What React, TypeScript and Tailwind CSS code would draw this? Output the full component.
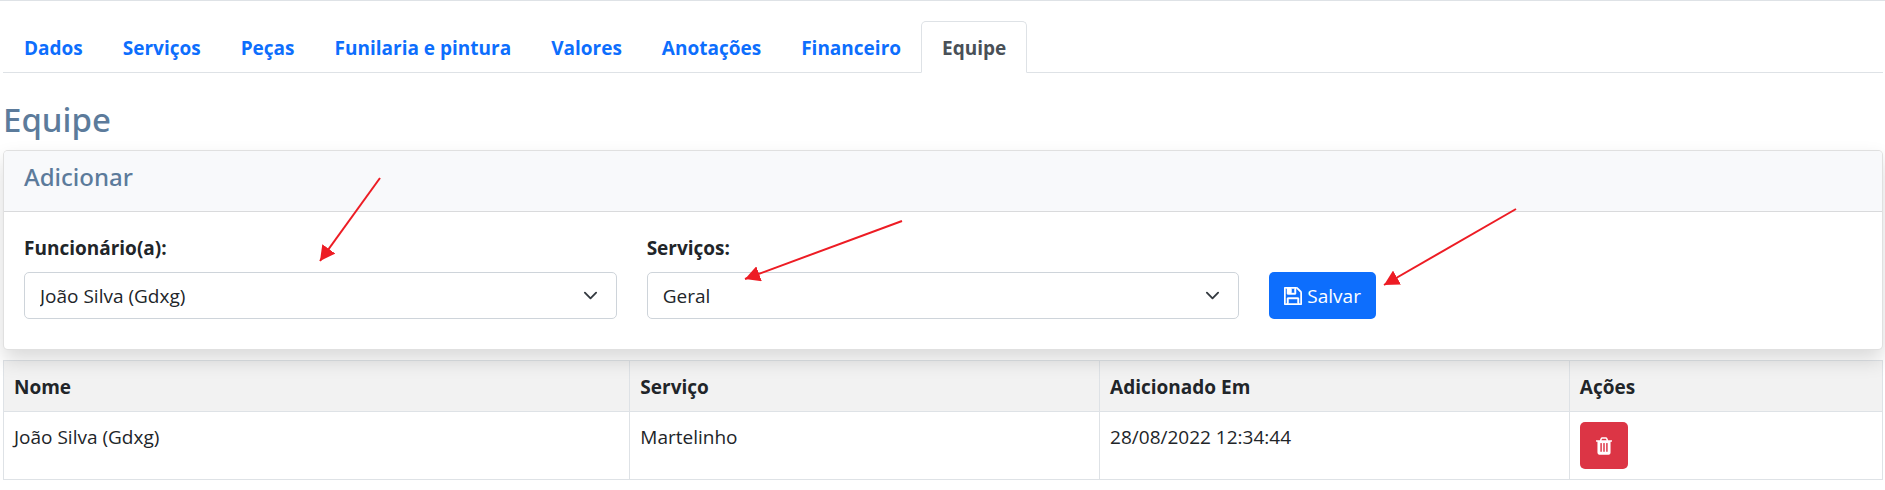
import type { ReactNode } from "react"

const tabs = [
  "Dados",
  "Serviços",
  "Peças",
  "Funilaria e pintura",
  "Valores",
  "Anotações",
  "Financeiro",
  "Equipe",
]

const members = [
  { name: "João Silva (Gdxg)", service: "Martelinho", addedAt: "28/08/2022 12:34:44" },
]

const arrows = [
  { x1: 380, y1: 177, x2: 320, y2: 260 },
  { x1: 902, y1: 220, x2: 745, y2: 278 },
  { x1: 1516, y1: 208, x2: 1384, y2: 284 },
]

function SaveIcon() {
  return (
    <svg viewBox="128 128 1536 1536" fill="currentColor" className="size-[18px]" aria-hidden="true">
      <path
        stroke="currentColor"
        strokeWidth="40"
        d="M512 1536h768v-384h-768v384zm896 0h128v-896q0-14-10-38.5t-20-34.5l-281-281q-10-10-34-20t-39-10v416q0 40-28 68t-68 28h-576q-40 0-68-28t-28-68v-416h-128v1280h128v-416q0-40 28-68t68-28h832q40 0 68 28t28 68v416zm-384-928v-320q0-13-9.5-22.5t-22.5-9.5h-192q-13 0-22.5 9.5t-9.5 22.5v320q0 13 9.5 22.5t22.5 9.5h192q13 0 22.5-9.5t9.5-22.5zm640 32v928q0 40-28 68t-68 28h-1344q-40 0-68-28t-28-68v-1344q0-40 28-68t68-28h928q40 0 88 20t76 48l280 280q28 28 48 76t20 88z"
      />
    </svg>
  )
}

function TrashIcon() {
  return (
    <svg viewBox="192 128 1408 1536" fill="currentColor" className="h-[18px] w-4" aria-hidden="true">
      <path d="M704 1376v-704q0-14-9-23t-23-9h-64q-14 0-23 9t-9 23v704q0 14 9 23t23 9h64q14 0 23-9t9-23zm256 0v-704q0-14-9-23t-23-9h-64q-14 0-23 9t-9 23v704q0 14 9 23t23 9h64q14 0 23-9t9-23zm256 0v-704q0-14-9-23t-23-9h-64q-14 0-23 9t-9 23v704q0 14 9 23t23 9h64q14 0 23-9t9-23zm-544-992h448l-48-117q-7-9-17-11h-317q-10 2-17 11zm928 32v64q0 14-9 23t-23 9h-96v948q0 83-47 143.5t-113 60.5h-832q-66 0-113-58.5t-47-141.5v-952h-96q-14 0-23-9t-9-23v-64q0-14 9-23t23-9h309l70-167q15-37 54-63t79-26h320q40 0 79 26t54 63l70 167h309q14 0 23 9t9 23z" />
    </svg>
  )
}

function SelectField({ id, label, children }: { id: string; label: string; children: ReactNode }) {
  return (
    <div>
      <label htmlFor={id} className="mb-[9px] block font-bold">
        {label}
      </label>
      <div className="relative">
        <select
          id={id}
          className="block h-[47px] w-full appearance-none rounded-[5px] border border-[#ced4da] bg-white px-[15px]"
        >
          {children}
        </select>
        <svg
          viewBox="0 0 16 16"
          className="pointer-events-none absolute top-4 right-[19px] size-[15px] fill-none stroke-[#343a40] stroke-2"
          strokeLinecap="round"
          strokeLinejoin="round"
          aria-hidden="true"
        >
          <path d="M2 5l6 6 6-6" />
        </svg>
      </div>
    </div>
  )
}

// Red guide arrows drawn over the page
function GuideArrows() {
  return (
    <svg className="pointer-events-none absolute inset-0 h-full w-full" aria-hidden="true">
      <defs>
        <marker
          id="arrow-head"
          markerUnits="userSpaceOnUse"
          markerWidth="16"
          markerHeight="16"
          refX="15"
          refY="8"
          orient="auto"
        >
          <path d="M0 0L15 8L0 16Z" fill="#ed1c24" />
        </marker>
      </defs>
      {arrows.map((arrow) => (
        <line key={arrow.x1} {...arrow} stroke="#ed1c24" strokeWidth="2" markerEnd="url(#arrow-head)" />
      ))}
    </svg>
  )
}

export default function App() {
  return (
    <div className="relative border-t border-[#dee2e6] bg-white pt-5 pr-[2px] pb-[10px] pl-[3px] font-['Open_Sans','Noto_Sans',sans-serif] text-[19px] leading-[30px] text-[#212529]">
      <nav className="flex border-b border-[#dee2e6] pl-px font-bold">
        {tabs.map((tab) => (
          <a
            key={tab}
            href="#"
            className={
              tab === "Equipe"
                ? "-mb-px rounded-t-[5px] border border-[#dee2e6] border-b-white bg-white px-5 pt-[11px] pb-[9px] text-[#495057]"
                : "-mb-px border border-transparent px-[19px] pt-[11px] pb-[9px] text-[#0d6efd]"
            }
          >
            {tab}
          </a>
        ))}
      </nav>

      <h2 className="mt-[26px] mb-[9px] font-['Noto_Sans',sans-serif] text-[33px] leading-[42px] font-medium text-[#5c7b9b]">
        Equipe
      </h2>

      <section className="relative rounded-[5px] border border-black/12 bg-white shadow-[0_10px_20px_rgba(0,0,0,0.15)]">
        <header className="rounded-t-[4px] border-b border-black/12 bg-[#f8f9fb] px-5 pt-[11px] pb-[19px]">
          <h5 className="font-['Noto_Sans',sans-serif] text-2xl leading-[30px] font-medium text-[#5c7b9b]">
            Adicionar
          </h5>
        </header>
        <form className="grid grid-cols-3 items-end gap-[30px] px-5 pt-[21px] pb-[30px]">
          <SelectField id="employee" label="Funcionário(a):">
            <option>João Silva (Gdxg)</option>
          </SelectField>
          <SelectField id="service" label="Serviços:">
            <option>Geral</option>
          </SelectField>
          <div>
            <button
              type="button"
              className="flex h-[47px] items-center gap-[5px] rounded-[5px] bg-[#0d6efd] px-[15px] text-white"
            >
              <SaveIcon />
              Salvar
            </button>
          </div>
        </form>
      </section>

      <table className="mt-[10px] w-full table-fixed border-collapse text-left [&_td]:border [&_td]:border-[#dee2e6] [&_td]:p-[10px] [&_th]:border [&_th]:border-[#dee2e6] [&_th]:px-[10px] [&_th]:pt-[11px] [&_th]:pb-[9px]">
        <thead className="bg-[#f2f2f2]">
          <tr>
            <th className="w-1/3">Nome</th>
            <th className="w-1/4">Serviço</th>
            <th className="w-1/4">Adicionado Em</th>
            <th className="w-1/6">Ações</th>
          </tr>
        </thead>
        <tbody>
          {members.map((member) => (
            <tr key={member.name} className="align-top">
              <td>{member.name}</td>
              <td>{member.service}</td>
              <td>{member.addedAt}</td>
              <td>
                <button
                  type="button"
                  aria-label="Excluir"
                  className="flex h-[47px] w-12 items-center justify-center rounded-[5px] bg-[#dc3545] text-white"
                >
                  <TrashIcon />
                </button>
              </td>
            </tr>
          ))}
        </tbody>
      </table>

      <GuideArrows />
    </div>
  )
}
